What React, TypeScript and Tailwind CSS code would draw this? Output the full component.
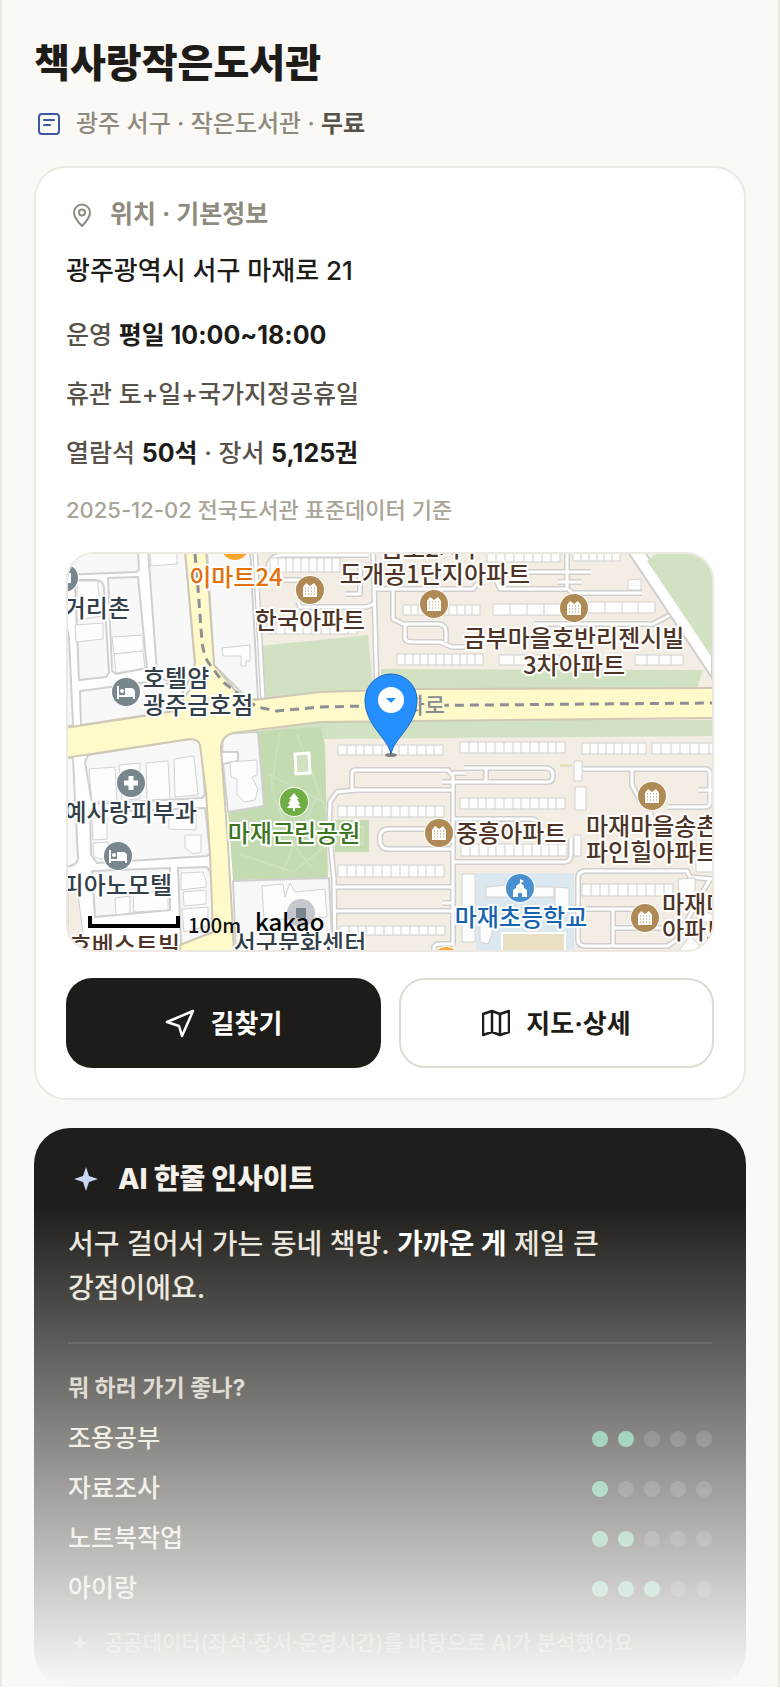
import type { ReactNode } from 'react';

const activities = [
  { label: '조용공부', score: 2 },
  { label: '자료조사', score: 1 },
  { label: '노트북작업', score: 2 },
  { label: '아이랑', score: 3 },
];

// x, y, width, height, number of units
const apartmentRows = [
  [202, 4, 70, 14, 9],
  [419, -2, 73, 10, 8],
  [505, -2, 47, 9, 6],
  [335, 51, 77, 10, 10],
  [425, 50, 85, 11, 5],
  [520, 48, 67, 11, 4],
  [199, 68, 90, 12, 10],
  [329, 100, 86, 11, 11],
  [431, 101, 60, 10, 4],
  [567, 101, 48, 10, 4],
  [270, 191, 105, 10, 12],
  [392, 188, 105, 11, 12],
  [514, 189, 64, 11, 8],
  [584, 189, 66, 11, 7],
  [392, 244, 105, 11, 12],
  [270, 252, 106, 11, 12],
  [393, 290, 106, 12, 12],
  [270, 311, 106, 12, 12],
  [514, 330, 91, 12, 10],
  [272, 372, 105, 9, 12],
];

const cityBlocks = [
  'M-4 -4H70L71 16L68 18L-4 21Z',
  'M80 -4H117L127 112L118 133L92 124L89 118Z',
  'M7 29Q8 26 12 26H28Q36 27 36 34L41 119L38 123L11 126Z',
  'M40 24L70 23L79 114L48 120L44 117Z',
  'M-4 57L1 84L5 171L-4 173Z',
  'M12 137L80 128L118 132L105 157L13 171Z',
  'M139 -4H182L190 145H180L146 111Z',
  'M17 208L20 201L122 185L129 186L133 191L137 241L134 244L24 250Z',
  'M22 258L137 254L142 299L139 302L29 309L23 301Z',
  'M24 317L102 314V356L27 363Z',
  'M110 314L139 313L144 321L145 378L113 391Z',
  'M-4 204H5L10 305Q9 312 -4 313Z',
  'M155 180L190 178L196 252L160 258L155 210L170 207V198H154Z',
  'M165 327L261 324L265 400H168Z',
];

const buildings = [
  'M82 -2H109V10L83 12Z',
  'M7 71L35 69V85L8 88Z',
  'M44 83L75 81V97L46 100Z',
  'M9 27L30 27V33L34 62L9 66Z',
  'M46 100L75 97L77 114L48 119Z',
  'M154 94L182 91V107H178V112H173V102H155Z',
  'M21 215L47 213L49 247L24 248Z',
  'M51 211L72 209V245L54 246Z',
  'M78 209L100 207L102 245L79 246Z',
  'M106 205L126 202L130 241L107 243Z',
  'M24 264L39 263V285L25 286Z',
  'M25 289L40 288V301L33 305L26 303Z',
  'M117 281H133V298L125 300L117 294Z',
  'M101 262L128 258V276L101 275Z',
  'M47 344L62 342V359L48 361Z',
  'M65 339L100 337V356L66 358Z',
  'M113 319L135 318L138 327V333L113 336Z',
  'M115 338L138 336V350L116 352Z',
  'M114 355L140 353V372L116 378Z',
  'M162 208L189 206V221L184 223L190 235L187 246L176 248L169 240V225L163 223Z',
  'M194 332L215 330L217 343L222 329L227 338L257 335L259 363L196 366Z',
  'M506 207H514V227H506Z',
  'M507 233H518V256H507Z',
  'M506 281H513V302H506Z',
  'M560 26L573 25V36H560Z',
  'M628 306H646V318H628Z',
  'M610 325L627 324V342L611 346Z',
  'M636 356L646 362V372L628 364Z',
  'M612 395L622 382L632 392L626 400H610Z',
];

const innerRoads = [
  'M305 -4L309 140',
  'M187 -4L195 146',
  'M200 26H240',
  'M231 53H298L306 50',
  'M232 53L230 48',
  'M277 40H292V10',
  'M200 14Q202 1 215 1H300',
  'M307 35H405L410 29',
  'M325 36V65L337 71V84Q337 88 345 88H372L384 93H405',
  'M337 70H371Q378 71 378 78V88',
  'M449 18H523',
  'M489 28H513',
  'M499 -4V34L504 39H574',
  'M429 28L432 35H499',
  'M467 70H585L602 61',
  'M284 236V220Q284 216 288 216H380L385 222V391',
  'M288 236L269 238L262 248L261 275L266 325L267 400',
  'M284 236H385',
  'M385 275H320Q311 276 312 285Q312 295 320 295H385',
  'M267 333H385',
  'M267 357H385',
  'M374 349H385',
  'M396 214H478Q485 215 485 221Q485 228 480 228H374',
  'M418 214V228',
  'M385 219H398',
  'M385 265H465L472 270',
  'M385 308H497Q503 307 503 300V285',
  'M515 215H638Q642 216 642 220V248Q642 253 636 253H600',
  'M564 216V231L572 246',
  'M631 236H644',
  'M582 258L586 270',
  'M510 385V324Q510 317 518 317H619L622 323L644 325',
  'M510 385Q510 392 518 392H600L608 386L642 325',
  'M510 355H580',
  'M545 356V392',
  'M545 374H600',
  'M366 400V393Q367 390 372 390H385',
];

function ApartmentRow({ row }: { row: number[] }) {
  const [x, y, w, h, units] = row;
  const step = w / units;
  let d = `M${x} ${y}h${w}v${h}h${-w}z`;
  for (let i = 1; i < units; i++) {
    d += `M${Math.round(x + step * i)} ${y}v${h}`;
  }
  return <path d={d} fill="#fdfdfc" stroke="#d2d1cf" />;
}

function Poi({ x, y, color, children }: { x: number; y: number; color: string; children?: ReactNode }) {
  return (
    <g transform={`translate(${x} ${y})`}>
      <circle r="15" fill="#fff" />
      <circle r="14" fill={color} />
      {children}
    </g>
  );
}

function ApartmentPoi({ x, y }: { x: number; y: number }) {
  return (
    <Poi x={x} y={y} color="#b08a55">
      <path d="M-7 7V-3L-4 -7L0 -4L4 -7L7 -3V7Z" fill="#fff" />
      <path d="M-5 -2H6M-5 1H6M-5 4H6" stroke="#b08a55" strokeDasharray="1 2" />
    </Poi>
  );
}

function HotelPoi({ x, y }: { x: number; y: number }) {
  return (
    <Poi x={x} y={y} color="#78868e">
      <path d="M-8 -6V7M-8 4H8M8 7V-1" stroke="#fff" strokeWidth="2" fill="none" />
      <path d="M-1 -4H6Q9 -3 9 0V4H-1Z" fill="#fff" />
      <circle cx="-4" cy="-1" r="2" fill="#fff" />
    </Poi>
  );
}

function Label({
  x,
  y,
  color,
  anchor = 'start',
  children,
}: {
  x: number;
  y: number;
  color: string;
  anchor?: 'start' | 'middle' | 'end';
  children: string;
}) {
  return (
    <text
      x={x}
      y={y}
      fill={color}
      textAnchor={anchor}
      stroke="#fff"
      strokeWidth="4"
      strokeLinejoin="round"
      paintOrder="stroke"
      className="font-['Noto_Sans_CJK_KR',sans-serif] text-[24px] font-medium"
    >
      {children}
    </text>
  );
}

const BROWN = '#4e3426';
const SLATE = '#333f48';

function LocationMap() {
  return (
    <svg
      viewBox="0 0 644 396"
      preserveAspectRatio="xMidYMid slice"
      className="block h-full w-full"
      role="img"
      aria-label="책사랑작은도서관 주변 지도"
    >
      <rect width="644" height="396" fill="#f3ede3" />
      <path d="M0 0H187L196 150L192 250L262 320L266 396H0Z" fill="#fff" />
      <path d="M0 337L10 340L17 396H0Z" fill="#f3ede3" stroke="#d0d0d0" />

      {/* parks */}
      <path d="M192 92L300 81L305 135L252 138L194 144Z" fill="#d1e2c2" />
      <path d="M313 115L635 116L629 134H313Z" fill="#d1e2c2" />
      <path d="M190 178L252 166H644V182L252 185Z" fill="#d1e2c2" />
      <path d="M190 177L253 173L257 191L260 325L165 326L160 258L195 252Z" fill="#c4dab0" />
      <path d="M267 266H301V298H267Z" fill="#c4dab0" />
      <path
        d="M212 178L203 235L225 290L245 315M229 180L260 262M200 220L260 250M172 300L225 318L258 292M214 318L250 240M275 290V273H295V292"
        stroke="#cde0bd"
        strokeWidth="2"
        fill="none"
      />
      <path d="M227 200L241 199L242 219L228 220Z" fill="#d1e2c2" stroke="#fff" strokeWidth="3" />

      {/* school grounds */}
      <rect x="408" y="319" width="98" height="77" fill="#dce8f0" />
      <rect x="434" y="379" width="63" height="20" fill="#e9dfc2" stroke="#fff" strokeWidth="2" />
      <rect x="492" y="210" width="12" height="3" fill="#e9dfc2" />

      <g fill="#f8f8f8" stroke="#d0d0d0" strokeWidth="2" strokeLinejoin="round">
        {cityBlocks.map((d) => (
          <path key={d} d={d} />
        ))}
      </g>
      <g fill="none" strokeLinejoin="round">
        <g stroke="#cfcfd0" strokeWidth="6">
          {innerRoads.map((d) => (
            <path key={d} d={d} />
          ))}
        </g>
        <g stroke="#fff" strokeWidth="3">
          {innerRoads.map((d) => (
            <path key={d} d={d} />
          ))}
        </g>
      </g>
      {apartmentRows.map((row) => (
        <ApartmentRow key={row.join('-')} row={row} />
      ))}
      <g fill="#fdfdfd" stroke="#d2d2d2">
        {buildings.map((d) => (
          <path key={d} d={d} />
        ))}
        <path d="M418 333L440 331V333H486V343H418Z" />
        <path d="M487 333L501 334V358H487Z" />
        <path d="M394 320H407V388H394Z" />
        <path d="M412 360H424V380L420 390L412 388Z" />
      </g>

      {/* diagonal street */}
      <path d="M560 -2L644 124V102L577 -2Z" fill="#fff" stroke="#cfcfd0" strokeWidth="2" />
      <path d="M579 7L588 0H644V103Z" fill="#d1e2c2" />

      {/* main roads */}
      <path
        d="M117 -4L127 108L122 135L107 157L82 161L-4 174V204L122 185Q130 185 132 191L138 238L142 301L145 378L112 391V400H166L165 378L160 290L153 195Q153 182 165 179L252 168L648 164V134L349 135L252 138L185 146L172 142L146 111L138 -4Z"
        fill="#fefac9"
        stroke="#cfc8b4"
        strokeWidth="2"
      />
      <path
        d="M127 0L130 34L134 88Q136 102 140 108L155 128L172 141L189 153L209 157L252 153L299 152L644 149"
        fill="none"
        stroke="#8e8f96"
        strokeWidth="3"
        strokeDasharray="9 6"
      />

      <text
        x="377"
        y="159"
        textAnchor="end"
        fill="#8a8b94"
        stroke="#fefac9"
        strokeWidth="4"
        paintOrder="stroke"
        className="font-['Noto_Sans_CJK_KR',sans-serif] text-[22px]"
      >
        금화로
      </text>

      <Poi x={167} y={-8} color="#ffa62f" />
      <Poi x={378} y={407} color="#ffa62f" />
      <Poi x={-4} y={24} color="#78868e">
        <path d="M0 -5H7V5H0Z" fill="#fff" />
      </Poi>
      <circle cx="233" cy="359" r="14" fill="#c6c8ce" />
      <path d="M228 354H238V364H228Z" fill="#78868e" />

      <ApartmentPoi x={242} y={36} />
      <ApartmentPoi x={366} y={50} />
      <ApartmentPoi x={506} y={54} />
      <ApartmentPoi x={584} y={242} />
      <ApartmentPoi x={371} y={279} />
      <ApartmentPoi x={577} y={364} />
      <HotelPoi x={58} y={138} />
      <HotelPoi x={50} y={302} />
      <Poi x={63} y={229} color="#78868e">
        <path d="M-7 0H7M0 -7V7" stroke="#fff" strokeWidth="5" />
      </Poi>
      <Poi x={226} y={248} color="#6fad45">
        <path d="M0 -9L5 -3H3L6 2H4L7 6H1V9H-1V6H-7L-4 2H-6L-3 -3H-5Z" fill="#fff" />
      </Poi>
      <Poi x={452} y={334} color="#4a8fcf">
        <path d="M-7 9V2L-4 0V-2L0 -5V-9L4 -7L1 -5L4 -2V0L7 2V9H2V5H-2V9Z" fill="#fff" />
      </Poi>

      <Label x={168} y={32} color="#e4700c" anchor="middle">이마트24</Label>
      <Label x={62} y={63} color={SLATE} anchor="end">거리촌</Label>
      <Label x={242} y={75} color={BROWN} anchor="middle">한국아파트</Label>
      <Label x={75} y={133} color={SLATE}>호텔얌</Label>
      <Label x={75} y={160} color={SLATE}>광주금호점</Label>
      <Label x={364} y={3} color={BROWN} anchor="middle">금호2지구</Label>
      <Label x={367} y={29} color={BROWN} anchor="middle">도개공1단지아파트</Label>
      <Label x={506} y={93} color={BROWN} anchor="middle">금부마을호반리젠시빌</Label>
      <Label x={506} y={120} color={BROWN} anchor="middle">3차아파트</Label>
      <Label x={129} y={267} color={SLATE} anchor="end">예사랑피부과</Label>
      <Label x={104} y={340} color={SLATE} anchor="end">피아노모텔</Label>
      <Label x={112} y={400} color={BROWN} anchor="end">호베스트빌</Label>
      <Label x={232} y={398} color={SLATE} anchor="middle">서구문화센터</Label>
      <Label x={226} y={288} color="#3c7420" anchor="middle">마재근린공원</Label>
      <Label x={388} y={288} color={BROWN}>중흥아파트</Label>
      <Label x={518} y={281} color={BROWN}>마재마을송촌</Label>
      <Label x={518} y={307} color={BROWN}>파인힐아파트</Label>
      <Label x={453} y={372} color="#1763b0" anchor="middle">마재초등학교</Label>
      <Label x={594} y={359} color={BROWN}>마재마을</Label>
      <Label x={594} y={385} color={BROWN}>아파트</Label>

      <path d="M22 362V372H110V362" fill="none" stroke="#000" strokeWidth="4" />
      <text x="120" y="379" fill="#111" className="font-['Noto_Sans_CJK_KR',sans-serif] text-[20px]">
        100m
      </text>
      <text x="187" y="377" fill="#000" className="font-['Noto_Sans_CJK_KR',sans-serif] text-[24px] font-medium">
        kakao
      </text>

      {/* pin */}
      <ellipse cx="323" cy="201" rx="6" ry="2" fill="#555" opacity="0.7" />
      <path
        d="M323 200C320 184 297 171 297 146A26 26 0 0 1 349 146C349 171 326 184 323 200Z"
        fill="#258fff"
        stroke="#1767c4"
      />
      <circle cx="323" cy="146" r="13" fill="#fff" />
      <path d="M318 144H328L323 149Z" fill="#258fff" />
    </svg>
  );
}

function Sparkle({ className }: { className: string }) {
  return (
    <svg viewBox="0 0 24 24" fill="currentColor" className={className} aria-hidden="true">
      <path d="M12 0L15 9L24 12L15 15L12 24L9 15L0 12L9 9Z" />
    </svg>
  );
}

function ScoreDots({ score }: { score: number }) {
  return (
    <div className="flex gap-[10px]" role="img" aria-label={`5점 중 ${score}점`}>
      {[1, 2, 3, 4, 5].map((n) => (
        <span key={n} className={`size-4 rounded-full ${n <= score ? 'bg-[#58b48b]' : 'bg-white/15'}`} />
      ))}
    </div>
  );
}

export default function App() {
  return (
    <main className="relative border-x-2 border-[#ebe9e2] bg-[#faf9f6] px-8 pt-10 font-['Inter','Noto_Sans_CJK_KR',sans-serif] font-medium text-[#1e1c18]">
      <h1 className="text-[39px] leading-[46px] font-extrabold">책사랑작은도서관</h1>

      <div className="mt-[22px] flex h-8 items-center text-[24px] leading-8 text-[#8f8a7e]">
        <svg
          viewBox="0 0 24 24"
          fill="none"
          stroke="#3d57a8"
          strokeWidth="2"
          strokeLinecap="round"
          className="ml-[3px] size-6"
          aria-hidden="true"
        >
          <rect x="2" y="2" width="20" height="20" rx="3" />
          <path d="M7 8H17M7 13H13" />
        </svg>
        <span className="ml-[15px]">광주 서구 · 작은도서관 ·</span>
        <strong className="ml-1.5 font-bold text-[#57534a]">무료</strong>
      </div>

      <section className="mt-[26px] rounded-[32px] border-2 border-[#ebe9e2] bg-white p-[30px]">
        <h2 className="flex h-[34px] items-center gap-4 text-[25px] font-bold text-[#8f8a7e]">
          <svg
            viewBox="0 0 24 24"
            fill="none"
            stroke="currentColor"
            strokeWidth="2"
            strokeLinejoin="round"
            className="ml-1 size-6"
            aria-hidden="true"
          >
            <path d="M12 23C8 19 4 14 4 9.5A8 8 0 0 1 20 9.5C20 14 16 19 12 23Z" />
            <circle cx="12" cy="9.5" r="3" />
          </svg>
          위치 · 기본정보
        </h2>

        <p className="mt-[19px] text-[26px] leading-10">광주광역시 서구 마재로 21</p>

        <div className="mt-[25px] flex flex-col gap-5 text-[25px] leading-[39px] text-[#57534a]">
          <p>
            운영 <strong className="font-bold text-[#1e1c18]">평일 10:00~18:00</strong>
          </p>
          <p>휴관 토+일+국가지정공휴일</p>
          <p>
            열람석 <strong className="font-bold text-[#1e1c18]">50석</strong> · 장서{' '}
            <strong className="font-bold text-[#1e1c18]">5,125권</strong>
          </p>
        </div>

        <p className="mt-[21px] text-[22px] leading-8 text-[#a9a498]">2025-12-02 전국도서관 표준데이터 기준</p>

        <div className="mt-[26px] h-[400px] overflow-hidden rounded-[28px] border-2 border-[#ebe9e2]">
          <LocationMap />
        </div>

        <div className="mt-[26px] grid grid-cols-2 gap-[18px] text-[26px] font-bold">
          <button type="button" className="flex h-[90px] items-center justify-center gap-4 rounded-[26px] bg-[#1e1c18] text-white">
            <svg
              viewBox="0 0 30 30"
              fill="none"
              stroke="currentColor"
              strokeWidth="2.5"
              strokeLinejoin="round"
              className="size-[30px]"
              aria-hidden="true"
            >
              <path d="M2 14L28 3L17 28L14 18Z" />
            </svg>
            길찾기
          </button>
          <button
            type="button"
            className="flex h-[90px] items-center justify-center gap-4 rounded-[26px] border-2 border-[#dedbd3] bg-white"
          >
            <svg
              viewBox="0 0 28 28"
              fill="none"
              stroke="currentColor"
              strokeWidth="2.5"
              strokeLinejoin="round"
              className="size-7"
              aria-hidden="true"
            >
              <path d="M1 5L10 2L18 5L27 2V23L18 26L10 23L1 26ZM10 2V23M18 5V26" />
            </svg>
            지도·상세
          </button>
        </div>
      </section>

      <section className="mt-7 rounded-[36px] bg-[#201e1a] px-[34px] pt-[33px] pb-[30px] text-[#f4f1ea]">
        <h2 className="flex h-9 items-center text-[28px] font-extrabold">
          <Sparkle className="ml-[6px] size-6 text-[#c9d4f2]" />
          <span className="ml-5">AI 한줄 인사이트</span>
        </h2>
        <p className="mt-[25px] pr-20 text-[28px] leading-[44px] break-keep text-[#e9e5dc]">
          서구 걸어서 가는 동네 책방. <strong className="font-bold text-white">가까운 게</strong> 제일 큰 강점이에요.
        </p>

        <hr className="mt-8 border-t-2 border-white/10" />

        <h3 className="mt-7 text-[23px] leading-8 font-bold text-[#cfcabf]">뭐 하러 가기 좋나?</h3>
        <ul className="mt-[10px]">
          {activities.map((item) => (
            <li key={item.label} className="flex h-[50px] items-center justify-between text-[25px] text-[#e9e5dc]">
              {item.label}
              <ScoreDots score={item.score} />
            </li>
          ))}
        </ul>

        <p className="mt-[15px] flex h-7 items-center text-[21px] text-[#8f8a7e]">
          <Sparkle className="ml-1 size-4" />
          <span className="ml-4">공공데이터(좌석·장서·운영시간)를 바탕으로 AI가 분석했어요</span>
        </p>
      </section>

      {/* fade out towards the rest of the page */}
      <div className="pointer-events-none absolute inset-x-0 bottom-0 h-[480px] bg-linear-to-b from-[#faf9f6]/0 to-[#faf9f6]" />
    </main>
  );
}
